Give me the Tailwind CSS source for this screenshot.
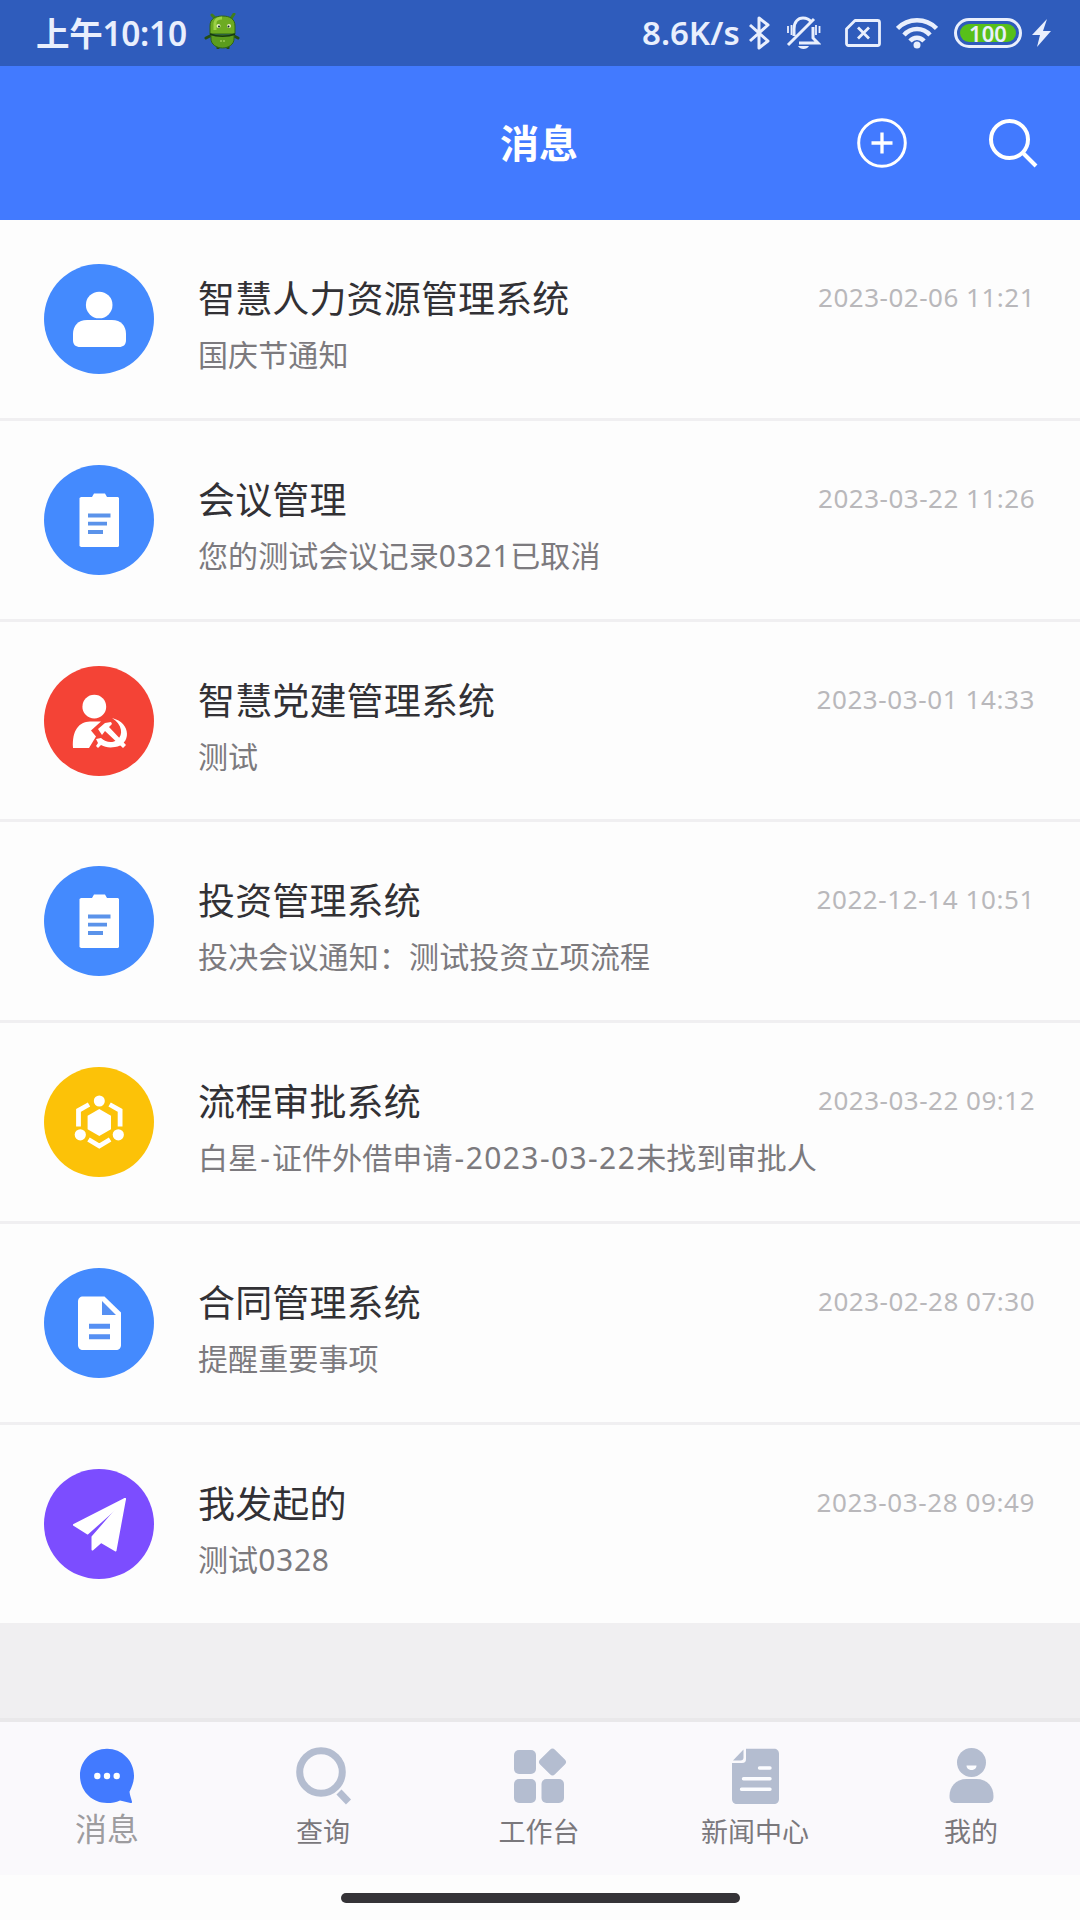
<!DOCTYPE html>
<html lang="zh-CN">
	<head>
		<meta charset="UTF-8" />
		<meta name="viewport" content="width=device-width, initial-scale=1.0" />
		<title>消息</title>
		<script src="https://cdn.jsdelivr.net/npm/@tailwindcss/browser@4"></script>
	</head>
	<body
		class="w-[1080px] h-[1920px] overflow-hidden flex flex-col bg-[#fdfdfd] font-['Noto_Sans','Noto_Sans_CJK_SC',sans-serif] whitespace-nowrap"
	>
		<!-- status bar -->
		<div class="h-[66px] shrink-0 bg-[#2f5cbc] text-[#e9effd] flex items-center pl-9 pr-[29px]">
			<span class="text-[33.5px] leading-[66px] w-[168px] font-semibold tracking-[-0.3px]">上午10:10</span>
			<svg class="w-9 h-9 -mt-1" viewBox="0 0 36 36">
				<path d="M8 2l5 5M30 1l-4 6" stroke="#3f7d1c" stroke-width="3" stroke-linecap="round" />
				<path d="M6 23l-4 2M30 23l4 2M14 33v2M24 33v2" stroke="#234d12" stroke-width="3" stroke-linecap="round" />
				<path d="M6 21V13C6 6 11 3 18.500 3S31 6 31 13v8z" fill="#6dab22" stroke="#2f6416" />
				<path d="M7 22h23v4c0 5-5 9-11.500 9S7 31 7 26z" fill="#5b9c1e" stroke="#2f6416" />
				<path d="M11 17V10c0-3 3-5 7-5" stroke="#9bd145" stroke-width="3" fill="none" />
				<path d="M6 21c7 3 18 3 25 0" stroke="#163a10" stroke-width="1.500" fill="none" />
				<circle cx="14.500" cy="13" r="2" fill="#e8f5c0" /><circle cx="25" cy="13" r="2" fill="#e8f5c0" />
				<circle cx="15" cy="13.500" r="1" fill="#123" /><circle cx="24.500" cy="13.500" r="1" fill="#123" />
				<path d="M16 28h6" stroke="#b6e070" stroke-dasharray="2 1" />
			</svg>
			<span class="ml-auto text-[33px] leading-[66px] font-semibold w-[107px]">8.6K/s</span>
			<svg class="w-[22px] h-[34px]" viewBox="0 0 22 34" fill="none" stroke="currentColor" stroke-width="3" stroke-linejoin="round">
				<path d="M1 9l18 16-9 7V2l9 7L1 25" />
			</svg>
			<svg class="w-[35px] h-[34px] ml-[15px]" viewBox="0 0 35 34" fill="none" stroke="currentColor" stroke-width="3">
				<path d="M8 20V13C8 6 12 2 17 2c3 0 6 1 8 4M27 11v11l5 5H13M2 29L28 3" />
				<path d="M2 10v7M5.500 9v10M30 9v10M33.500 10v7" stroke-width="1.800" />
				<path d="M12 30h11c-2 4-9 4-11 0z" fill="currentColor" stroke="none" />
			</svg>
			<svg class="w-9 h-7 ml-6" viewBox="0 0 36 28" fill="none" stroke="currentColor" stroke-width="2.800" stroke-linejoin="round">
				<path d="M10 1.500h22.500a2 2 0 0 1 2 2v21a2 2 0 0 1-2 2h-29a2 2 0 0 1-2-2V10z" />
				<path d="M13 8.500l11 11M24 8.500l-11 11" />
			</svg>
			<svg class="w-[42px] h-[31px] ml-[15px]" viewBox="0 0 42 31" fill="none" stroke="currentColor" stroke-width="4.500">
				<path d="M1.500 10.500C12-0.500 30-0.500 40.500 10.500M8 17c7-8 19-8 26 0M14 23c4-4.500 10-4.500 14 0" />
				<circle cx="21" cy="27" r="3.500" fill="currentColor" stroke="none" />
			</svg>
			<div class="w-[68px] h-[30px] ml-4 rounded-full border-[3px] border-[#e9effd] p-[3px]">
				<div class="h-full rounded-full bg-[#57c01a] flex items-center justify-center text-[22px] leading-none font-semibold">100</div>
			</div>
			<svg class="w-[19px] h-7 ml-[10px]" viewBox="0 0 19 28" fill="currentColor">
				<path d="M15 0L0 16h8L5 28 19 12h-8z" />
			</svg>
		</div>

		<!-- title bar -->
		<header class="h-[154px] shrink-0 bg-[#427aff] text-white grid grid-cols-3 items-center pr-[42px] pl-[42px]">
			<span></span>
			<h1 class="text-center text-[39px] leading-[48px] font-bold -mt-[1px] -ml-[2px]">消息</h1>
			<div class="flex justify-end items-center gap-[81px]">
				<svg class="w-[50px] h-[50px] -mt-px" viewBox="0 0 50 50" fill="none" stroke="currentColor" stroke-width="3">
					<circle cx="25" cy="25" r="23.300" />
					<path d="M25 14.500v21M14.500 25h21" stroke-width="3.300" />
				</svg>
				<svg class="w-[50px] h-[50px] -mt-px" viewBox="0 0 50 50" fill="none" stroke="currentColor" stroke-width="4">
					<circle cx="21.500" cy="21.500" r="18.500" />
					<path d="M34.500 34.500L48 48" />
				</svg>
			</div>
		</header>

		<!-- message list -->
		<ul class="h-[1403px] shrink-0 overflow-hidden">
			<li class="h-[200.8px] border-b-[3px] border-[#f0eff1] flex pt-11 pl-11 pr-[45px]">
				<svg class="w-[110px] h-[110px] rounded-full bg-[#448afe]" viewBox="0 0 110 110" fill="#fff">
					<circle cx="55.200" cy="41" r="13.300" />
					<path d="M43 56h25c9 0 14 6 14 14v6c0 5-3 7-7 7H36c-4 0-7-2-7-7v-6c0-8 5-14 14-14z" />
				</svg>
				<div class="ml-11 flex-1">
					<h2 class="text-[37px] leading-[56px] mt-[7px] tracking-[0.15px] text-[#323135]">智慧人力资源管理系统</h2>
					<p class="text-[30px] leading-[56px] tracking-[0.1px] text-[#7c7a7e]">国庆节通知</p>
				</div>
				<time class="text-[26px] leading-[56px] tracking-[0.5px] mt-[5px] text-[#b9b8bb]">2023-02-06 11:21</time>
			</li>
			<li class="h-[200.8px] border-b-[3px] border-[#f0eff1] flex pt-11 pl-11 pr-[45px]">
				<svg class="w-[110px] h-[110px] rounded-full bg-[#448afe]" viewBox="0 0 110 110" fill="#fff">
					<path d="M37 32h11l2-3.500h11l2 3.500h11l1 1v48l-1 1H37l-1.500-1V33z" />
					<path d="M44 50.500h22.500M44 58.700h19M44 67h15" stroke="#5b93ea" stroke-width="3.800" />
				</svg>
				<div class="ml-11 flex-1">
					<h2 class="text-[37px] leading-[56px] mt-[7px] tracking-[0.15px] text-[#323135]">会议管理</h2>
					<p class="text-[30px] leading-[56px] tracking-[0.1px] text-[#7c7a7e]">您的测试会议记录<span class="tracking-[0.7px]">0321</span>已取消</p>
				</div>
				<time class="text-[26px] leading-[56px] tracking-[0.5px] mt-[5px] text-[#b9b8bb]">2023-03-22 11:26</time>
			</li>
			<li class="h-[200.8px] border-b-[3px] border-[#f0eff1] flex pt-11 pl-11 pr-[45px]">
				<svg class="w-[110px] h-[110px] rounded-full bg-[#f44336]" viewBox="0 0 110 110" fill="#fff">
					<circle cx="50.300" cy="40.700" r="11.900" />
					<path d="M29 82C28 64 35 56 46 55.500h11L47 64.500l5 6-7 11.500z" />
					<!-- hammer and sickle -->
					<path d="M54 63l7-6 6-1 1 2-3 3 17 18-3 3-18-17-3 4z" />
					<path d="M68 52c20 5 19 27 3 29-6 1-10 0-14-2l-3 3-2-2 2-3-2-4 5-1c5 5 12 5 16 2 7-5 5-16-5-22z" />
				</svg>
				<div class="ml-11 flex-1">
					<h2 class="text-[37px] leading-[56px] mt-[7px] tracking-[0.15px] text-[#323135]">智慧党建管理系统</h2>
					<p class="text-[30px] leading-[56px] tracking-[0.1px] text-[#7c7a7e]">测试</p>
				</div>
				<time class="text-[26px] leading-[56px] tracking-[0.6px] mt-[5px] text-[#b9b8bb]">2023-03-01 14:33</time>
			</li>
			<li class="h-[200.8px] border-b-[3px] border-[#f0eff1] flex pt-11 pl-11 pr-[45px]">
				<svg class="w-[110px] h-[110px] rounded-full bg-[#448afe]" viewBox="0 0 110 110" fill="#fff">
					<path d="M37 32h11l2-3.500h11l2 3.500h11l1 1v48l-1 1H37l-1.500-1V33z" />
					<path d="M44 50.500h22.500M44 58.700h19M44 67h15" stroke="#5b93ea" stroke-width="3.800" />
				</svg>
				<div class="ml-11 flex-1">
					<h2 class="text-[37px] leading-[56px] mt-[7px] tracking-[0.15px] text-[#323135]">投资管理系统</h2>
					<p class="text-[30px] leading-[56px] tracking-[0.15px] text-[#7c7a7e]">投决会议通知：测试投资立项流程</p>
				</div>
				<time class="text-[26px] leading-[56px] tracking-[0.6px] mt-[5px] text-[#b9b8bb]">2022-12-14 10:51</time>
			</li>
			<li class="h-[200.8px] border-b-[3px] border-[#f0eff1] flex pt-11 pl-11 pr-[45px]">
				<svg class="w-[110px] h-[110px] rounded-full bg-[#fcc208]" viewBox="0 0 110 110" fill="#fff">
					<path d="M55.300 42l11.700 6.700v13.600L55.300 69l-11.700-6.700V48.700z" />
					<circle cx="55.300" cy="34" r="5.500" />
					<circle cx="36.300" cy="67.800" r="5.600" />
					<circle cx="74.300" cy="67.800" r="5.600" />
					<path d="M45 37.500l-10.500 6v16M65.600 37.500l10.500 6v16M44.500 72.500l10.800 6.500 10.800-6.500" fill="none" stroke="#fff" stroke-width="4.800" />
				</svg>
				<div class="ml-11 flex-1">
					<h2 class="text-[37px] leading-[56px] mt-[7px] tracking-[0.15px] text-[#323135]">流程审批系统</h2>
					<p class="text-[30px] leading-[56px] tracking-[0.1px] text-[#7c7a7e]">白星<span class="px-[2px]">-</span>证件外借申请<span class="tracking-[1.4px] pl-[2px]">-2023-03-22</span>未找到审批人</p>
				</div>
				<time class="text-[26px] leading-[56px] tracking-[0.5px] mt-[5px] text-[#b9b8bb]">2023-03-22 09:12</time>
			</li>
			<li class="h-[200.8px] border-b-[3px] border-[#f0eff1] flex pt-11 pl-11 pr-[45px]">
				<svg class="w-[110px] h-[110px] rounded-full bg-[#448afe]" viewBox="0 0 110 110" fill="#fff">
					<path d="M39 28.500h21.500L77 44.500V77c0 3-2 5-5 5H39c-3 0-5-2-5-5V33.500c0-3 2-5 5-5z" />
					<path d="M58 33v14h14zM45 55.700h21v5H45zM45 66.300h21v5H45z" fill="#5690f3" />
				</svg>
				<div class="ml-11 flex-1">
					<h2 class="text-[37px] leading-[56px] mt-[7px] tracking-[0.15px] text-[#323135]">合同管理系统</h2>
					<p class="text-[30px] leading-[56px] tracking-[0.1px] text-[#7c7a7e]">提醒重要事项</p>
				</div>
				<time class="text-[26px] leading-[56px] tracking-[0.5px] mt-[5px] text-[#b9b8bb]">2023-02-28 07:30</time>
			</li>
			<li class="h-[200.8px] flex pt-11 pl-11 pr-[45px]">
				<svg class="w-[110px] h-[110px] rounded-full bg-[#7c4dff]" viewBox="0 0 110 110" fill="#fff" stroke="#fff" stroke-linejoin="round" stroke-width="2">
					<path d="M81 30L30 56l13.500 8.500L70 41z" />
					<path d="M81 30L71.500 81.500 57 73l-8.500 7.500V68L71 42z" />
				</svg>
				<div class="ml-11 flex-1">
					<h2 class="text-[37px] leading-[56px] mt-[7px] tracking-[0.15px] text-[#323135]">我发起的</h2>
					<p class="text-[30px] leading-[56px] tracking-[0.1px] text-[#7c7a7e]">测试<span class="tracking-[0.7px]">0328</span></p>
				</div>
				<time class="text-[26px] leading-[56px] tracking-[0.6px] mt-[5px] text-[#b9b8bb]">2023-03-28 09:49</time>
			</li>
		</ul>

		<div class="h-[99px] shrink-0 bg-[#f0eff1] border-b-4 border-[#e9e8ea]"></div>

		<!-- tab bar -->
		<nav class="h-[153px] shrink-0 bg-[#faf9fc] grid grid-cols-5 text-[27px] leading-[36px] text-[#7a787c]">
			<a class="flex flex-col items-center pt-6 -ml-[2px]">
				<svg class="w-[60px] h-[60px]" viewBox="0 0 60 60">
					<path d="M30 2.700c15 0 27 12 27 27 0 6-2 11-4.500 16 .5 4 1.500 6 2.500 10 .3 1-.5 1.500-1.500 1.300L43 54.500c-4 2-8 2.500-13 2.500C15 57 3 45 3 29.700s12-27 27-27z" fill="#427aff" />
					<circle cx="20.300" cy="30" r="3.200" fill="#fff" /><circle cx="30" cy="30" r="3.200" fill="#fff" /><circle cx="39.700" cy="30" r="3.200" fill="#fff" />
				</svg>
				<span class="text-[32px] leading-[46px] text-[#9d9c9f]">消息</span>
			</a>
			<a class="flex flex-col items-center pt-6 gap-2 -ml-[2px]">
				<svg class="w-[60px] h-[60px]" viewBox="0 0 60 60" fill="none" stroke="#b4bdd0" stroke-width="7">
					<circle cx="28" cy="26" r="21.300" />
					<path d="M46 46l9.500 10" />
				</svg>
				<span>查询</span>
			</a>
			<a class="flex flex-col items-center pt-6 gap-2 -ml-[2px]">
				<svg class="w-[60px] h-[60px]" viewBox="0 0 60 60" fill="#b4bdd0">
					<rect x="5" y="4" width="22" height="24" rx="5" />
					<rect x="5" y="33" width="22" height="24" rx="5" />
					<rect x="32.500" y="33" width="22.500" height="24" rx="5" />
					<rect x="33" y="5.500" width="21" height="21" rx="3.500" transform="rotate(45 43.500 16)" />
				</svg>
				<span>工作台</span>
			</a>
			<a class="flex flex-col items-center pt-6 gap-2 -ml-[2px]">
				<svg class="w-[60px] h-[60px]" viewBox="0 0 60 60" fill="#b4bdd0">
					<path d="M21 2.700h28c3 0 5 2 5 5V53c0 3-2 5-5 5H12c-3 0-5-2-5-5V17h10c3 0 4-1.500 4-4z" />
					<path d="M18.500 3.500v8c0 2-1 3-3 3H8z" />
					<path d="M34.500 22H45M18.500 32.700H45M16.500 43.300H45" stroke="#fbfcff" stroke-width="3.400" stroke-linecap="round" />
				</svg>
				<span>新闻中心</span>
			</a>
			<a class="flex flex-col items-center pt-6 gap-2 -ml-[2px]">
				<svg class="w-[60px] h-[60px]" viewBox="0 0 60 60" fill="#b4bdd0">
					<circle cx="30.500" cy="16.500" r="14.500" />
					<path d="M25.500 33h10c11 0 17 8 17 17 0 5-2 7-6 7h-32c-4 0-6-2-6-7 0-9 6-17 17-17z" />
					<path d="M25.500 19.500h10c0 6-10 6-10 0z" fill="#fbfcff" />
				</svg>
				<span>我的</span>
			</a>
		</nav>

		<!-- gesture handle -->
		<div class="pt-[18px] flex justify-center">
			<div class="w-[399px] h-[10px] rounded-full bg-[#353337]"></div>
		</div>
	</body>
</html>
